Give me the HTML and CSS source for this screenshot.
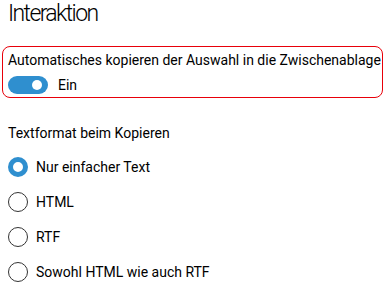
FILE: index.html
```html
<!DOCTYPE html>
<html lang="de">
<head>
<meta charset="utf-8">
<link rel="stylesheet" href="styles.css">
</head>
<body>
<div class="page">
  <h1 class="title">Interaktion</h1>
  <div class="highlight">
    <div class="label">Automatisches kopieren der Auswahl in die Zwischenablage</div>
    <div class="toggle-row">
      <span class="toggle"><span class="knob"></span></span>
      <span class="toggle-text">Ein</span>
    </div>
  </div>
  <div class="group-label">Textformat beim Kopieren</div>
  <div class="radios">
    <div class="radio-row"><span class="radio checked"></span><span class="radio-text">Nur einfacher Text</span></div>
    <div class="radio-row"><span class="radio"></span><span class="radio-text">HTML</span></div>
    <div class="radio-row"><span class="radio"></span><span class="radio-text">RTF</span></div>
    <div class="radio-row"><span class="radio"></span><span class="radio-text">Sowohl HTML wie auch RTF</span></div>
  </div>
</div>
</body>
</html>
```
FILE: styles.css
```css
html, body {
  margin: 0;
  padding: 0;
  background: #ffffff;
}
body {
  font-family: Roboto, "Noto Sans", sans-serif;
  color: #000000;
  font-size: 14px;
}
.page {
  padding: 0 4px 0 2px;
  width: 381px;
}
.title {
  margin: 0;
  padding: 0 0 0 6px;
  font-size: 23px;
  font-weight: 300;
  letter-spacing: -1.6px;
  line-height: 27px;
  color: #000;
}
.highlight {
  margin-top: 19px;
  border: 1px solid #e8000a;
  border-radius: 8px;
  padding: 3px 5px 3px 5px;
  height: 44px;
  white-space: nowrap;
}
.label {
  line-height: 20px;
}
.toggle-row {
  display: flex;
  align-items: center;
  gap: 10px;
  margin-top: 5px;
}
.toggle {
  width: 40px;
  height: 18px;
  border-radius: 9px;
  background: #2f8fcf;
  display: flex;
  align-items: center;
  justify-content: flex-end;
  padding-right: 6px;
  box-sizing: border-box;
}
.knob {
  width: 10px;
  height: 10px;
  border-radius: 50%;
  background: #fff;
}
.toggle-text {
  line-height: 20px;
}
.group-label {
  margin-top: 25px;
  padding-left: 6px;
  line-height: 20px;
}
.radios {
  display: flex;
  flex-direction: column;
  gap: 15px;
  margin-top: 14px;
  padding-left: 6px;
}
.radio-row {
  display: flex;
  align-items: center;
  gap: 8px;
  height: 20px;
}
.radio {
  width: 20px;
  height: 20px;
  box-sizing: border-box;
  border-radius: 50%;
  border: 1px solid #333;
  background: #fff;
}
.radio.checked {
  border: 5px solid #2f8fcf;
}
```
